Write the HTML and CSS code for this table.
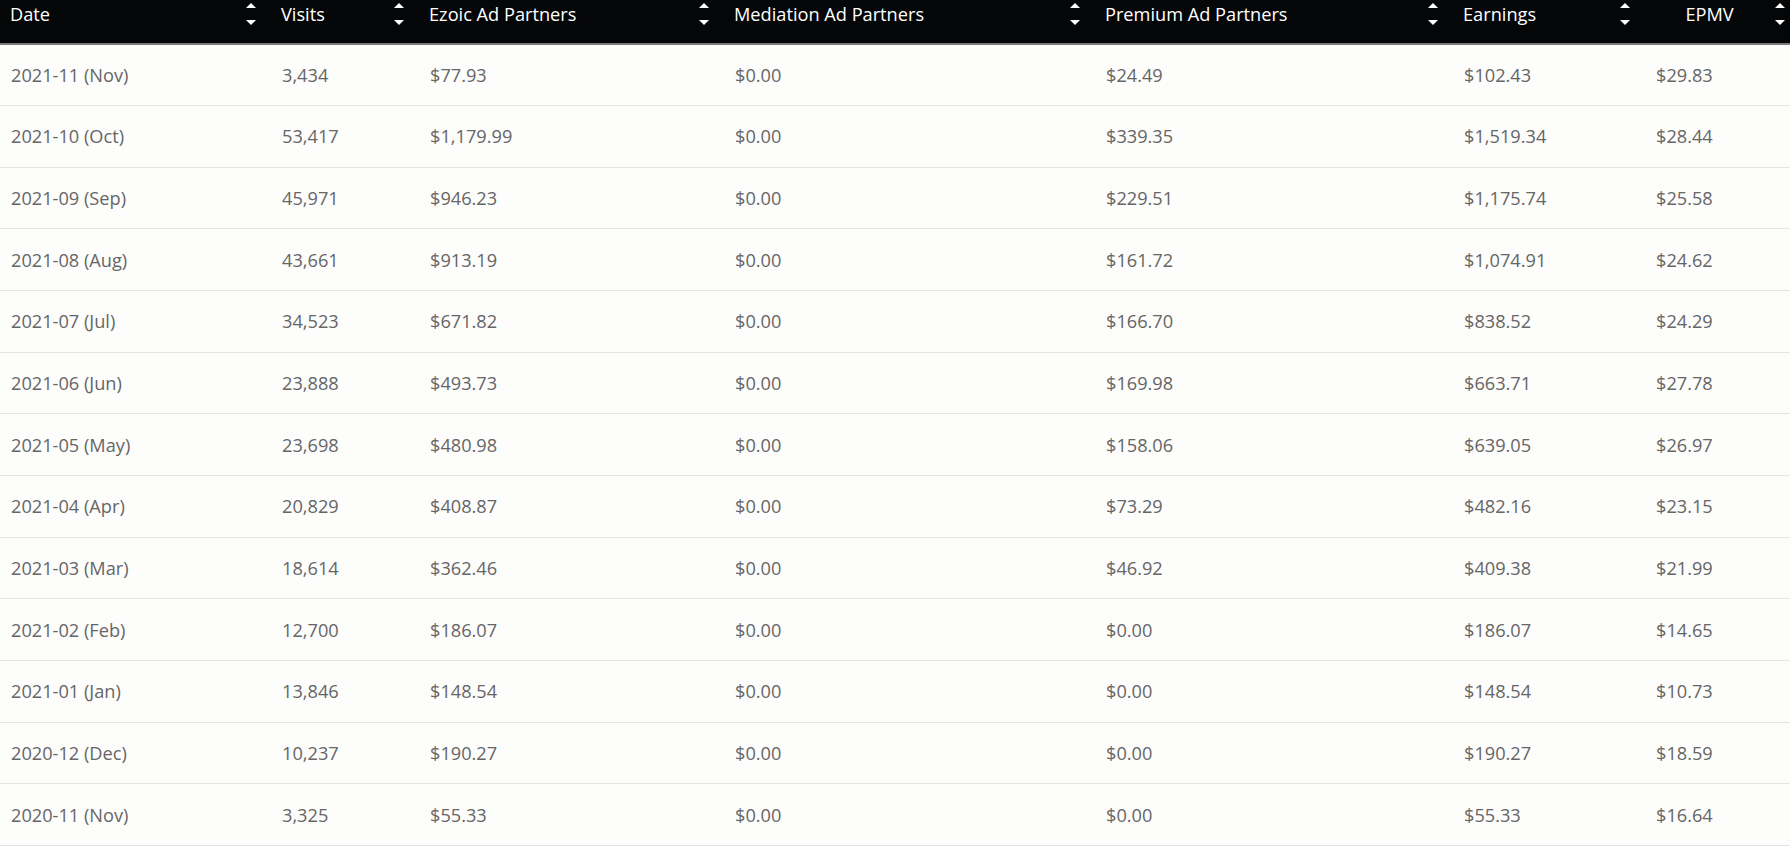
FILE: index.html
```html
<!DOCTYPE html>
<html lang="en">
<head>
<meta charset="utf-8">
<title>Earnings</title>
<link rel="stylesheet" href="styles.css">
</head>
<body>
<div class="wrap">
<table class="report">
  <colgroup>
    <col class="c-date"><col class="c-visits"><col class="c-ezoic"><col class="c-med"><col class="c-prem"><col class="c-earn"><col class="c-epmv">
  </colgroup>
  <thead>
    <tr>
      <th><span class="lbl">Date</span><span class="sort"><i class="up"></i><i class="down"></i></span></th>
      <th><span class="lbl">Visits</span><span class="sort"><i class="up"></i><i class="down"></i></span></th>
      <th><span class="lbl">Ezoic Ad Partners</span><span class="sort"><i class="up"></i><i class="down"></i></span></th>
      <th><span class="lbl">Mediation Ad Partners</span><span class="sort"><i class="up"></i><i class="down"></i></span></th>
      <th><span class="lbl">Premium Ad Partners</span><span class="sort"><i class="up"></i><i class="down"></i></span></th>
      <th><span class="lbl">Earnings</span><span class="sort"><i class="up"></i><i class="down"></i></span></th>
      <th class="center"><span class="lbl">EPMV</span><span class="sort"><i class="up"></i><i class="down"></i></span></th>
    </tr>
  </thead>
  <tbody>
    <tr><td>2021-11 (Nov)</td><td>3,434</td><td>$77.93</td><td>$0.00</td><td>$24.49</td><td>$102.43</td><td>$29.83</td></tr>
    <tr><td>2021-10 (Oct)</td><td>53,417</td><td>$1,179.99</td><td>$0.00</td><td>$339.35</td><td>$1,519.34</td><td>$28.44</td></tr>
    <tr><td>2021-09 (Sep)</td><td>45,971</td><td>$946.23</td><td>$0.00</td><td>$229.51</td><td>$1,175.74</td><td>$25.58</td></tr>
    <tr><td>2021-08 (Aug)</td><td>43,661</td><td>$913.19</td><td>$0.00</td><td>$161.72</td><td>$1,074.91</td><td>$24.62</td></tr>
    <tr><td>2021-07 (Jul)</td><td>34,523</td><td>$671.82</td><td>$0.00</td><td>$166.70</td><td>$838.52</td><td>$24.29</td></tr>
    <tr><td>2021-06 (Jun)</td><td>23,888</td><td>$493.73</td><td>$0.00</td><td>$169.98</td><td>$663.71</td><td>$27.78</td></tr>
    <tr><td>2021-05 (May)</td><td>23,698</td><td>$480.98</td><td>$0.00</td><td>$158.06</td><td>$639.05</td><td>$26.97</td></tr>
    <tr><td>2021-04 (Apr)</td><td>20,829</td><td>$408.87</td><td>$0.00</td><td>$73.29</td><td>$482.16</td><td>$23.15</td></tr>
    <tr><td>2021-03 (Mar)</td><td>18,614</td><td>$362.46</td><td>$0.00</td><td>$46.92</td><td>$409.38</td><td>$21.99</td></tr>
    <tr><td>2021-02 (Feb)</td><td>12,700</td><td>$186.07</td><td>$0.00</td><td>$0.00</td><td>$186.07</td><td>$14.65</td></tr>
    <tr><td>2021-01 (Jan)</td><td>13,846</td><td>$148.54</td><td>$0.00</td><td>$0.00</td><td>$148.54</td><td>$10.73</td></tr>
    <tr><td>2020-12 (Dec)</td><td>10,237</td><td>$190.27</td><td>$0.00</td><td>$0.00</td><td>$190.27</td><td>$18.59</td></tr>
    <tr><td>2020-11 (Nov)</td><td>3,325</td><td>$55.33</td><td>$0.00</td><td>$0.00</td><td>$55.33</td><td>$16.64</td></tr>
  </tbody>
</table>
</div>
</body>
</html>
```
FILE: styles.css
```css
html, body {
  margin: 0;
  padding: 0;
  background: #fdfdfc;
  overflow: hidden;
}
.wrap {
  width: 1790px;
  overflow: hidden;
}
.report {
  width: 1800px;
  table-layout: fixed;
  border-collapse: collapse;
  font-family: "Open Sans", "Noto Sans", sans-serif;
  font-size: 18.2px;
}
.c-date { width: 271px; }
.c-visits { width: 148px; }
.c-ezoic { width: 305px; }
.c-med { width: 371px; }
.c-prem { width: 358px; }
.c-earn { width: 192px; }
.c-epmv { width: 155px; }

.report thead tr {
  background: #050608;
  border-bottom: 2px solid #7b7b7b;
}
.report th {
  position: relative;
  height: 42px;
  padding: 1px 0 0 10px;
  text-align: left;
  vertical-align: top;
  color: #ffffff;
  font-weight: 400;
  line-height: 26px;
}
.report th.center {
  text-align: center;
  padding-left: 10px;
  padding-right: 36px;
}
.lbl {
  display: inline-block;
}
.sort {
  position: absolute;
  top: 3px;
  right: 15px;
  width: 10px;
  height: 22px;
}
.sort i {
  position: absolute;
  left: 0;
  width: 0;
  height: 0;
  border-left: 5px solid transparent;
  border-right: 5px solid transparent;
}
.sort .up {
  top: 0;
  border-bottom: 5px solid #ffffff;
}
.sort .down {
  bottom: 0;
  border-top: 5px solid #ffffff;
}

.report tbody tr {
  height: 61.65px;
  border-bottom: 1px solid #e4e4e2;
}
.report td {
  padding: 0 0 0 11px;
  color: #666666;
  vertical-align: middle;
  line-height: 24px;
  white-space: nowrap;
}
```
